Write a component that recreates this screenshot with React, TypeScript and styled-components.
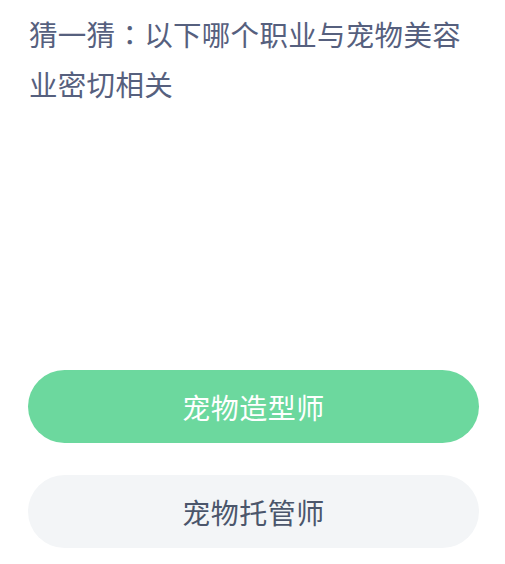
import { createGlobalStyle, styled } from 'styled-components';

const GlobalStyle = createGlobalStyle`
  html, body {
    margin: 0;
    padding: 0;
    background: #ffffff;
  }

  body {
    font-family: 'Noto Sans CJK SC', 'Noto Sans', sans-serif;
  }
`;

type Option = {
  label: string;
  selected?: boolean;
};

const options: Option[] = [
  { label: '宠物造型师', selected: true },
  { label: '宠物托管师' },
];

const App = () => {
  return (
    <>
      <GlobalStyle />
      <Page>
        <Question>
          猜一猜<Colon>：</Colon>以下哪个职业与宠物美容业密切相关
        </Question>
        <OptionList>
          {options.map((option) => (
            <OptionButton key={option.label} selected={!!option.selected}>
              {option.label}
            </OptionButton>
          ))}
        </OptionList>
      </Page>
    </>
  );
};

export default App;

const Page = styled.div`
  display: flex;
  flex-direction: column;

  width: 505px;
  height: 564px;
  padding: 9px 26px 0 28px;
  box-sizing: border-box;
`;

const Question = styled.p`
  margin: 0;
  padding-left: 1px;

  color: #56607e;
  font-size: 28.5px;
  line-height: 50px;
  letter-spacing: 0.3px;
`;

// centred full-width colon, as in the source
const Colon = styled.span`
  font-family: 'Noto Sans CJK JP', 'Noto Sans CJK SC', sans-serif;
`;

const OptionList = styled.div`
  display: flex;
  flex-direction: column;
  gap: 32px;

  margin-top: 261px;
`;

const OptionButton = styled.div<{ selected: boolean }>`
  display: flex;
  align-items: center;
  justify-content: center;

  height: 73px;

  color: ${({ selected }) => (selected ? '#ffffff' : '#4b566b')};
  font-size: 28px;
  letter-spacing: 0.5px;

  background: ${({ selected }) => (selected ? '#6cd89e' : '#f3f5f7')};
  border-radius: 37px;
`;
